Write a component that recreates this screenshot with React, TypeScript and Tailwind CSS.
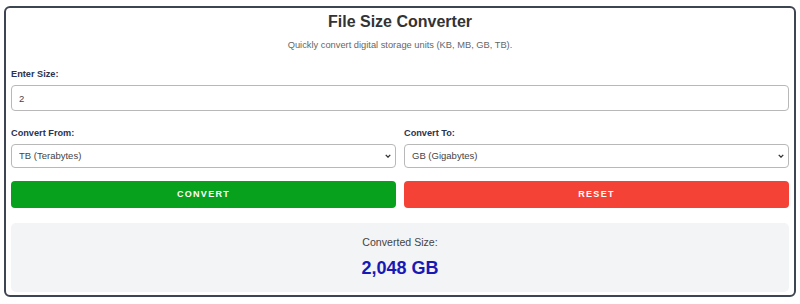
import { useState } from 'react';

const factors: Record<string, number> = { KB: 1, MB: 1024, GB: 1024 * 1024, TB: 1024 * 1024 * 1024 };

const units = [
  { value: 'KB', label: 'KB (Kilobytes)' },
  { value: 'MB', label: 'MB (Megabytes)' },
  { value: 'GB', label: 'GB (Gigabytes)' },
  { value: 'TB', label: 'TB (Terabytes)' },
];

interface UnitSelectProps {
  label: string;
  value: string;
  onChange: (v: string) => void;
}

function UnitSelect({ label, value, onChange }: UnitSelectProps) {
  return (
    <div>
      <label className="block text-[9.2px] leading-[12px] font-bold text-[#2c3350]">{label}</label>
      <div className="relative mt-[5px]">
        <select
          value={value}
          onChange={(e) => onChange(e.target.value)}
          className="block w-full h-[24px] px-[7px] appearance-none text-[9.5px] text-[#444] bg-white border border-[#b8b8b8] rounded-[4px] outline-none"
        >
          {units.map((u) => (
            <option key={u.value} value={u.value}>{u.label}</option>
          ))}
        </select>
        {/* small native-looking chevron */}
        <svg
          viewBox="0 0 8 5"
          className="absolute right-[5px] top-[10px] w-[6px] h-[4px] pointer-events-none"
          fill="none"
          stroke="#333"
          strokeWidth="1.8"
        >
          <path d="M1 1l3 3 3-3" />
        </svg>
      </div>
    </div>
  );
}

export default function App() {
  const [size, setSize] = useState('2');
  const [from, setFrom] = useState('TB');
  const [to, setTo] = useState('GB');
  const [result, setResult] = useState('2,048 GB');

  const convert = () => {
    const n = parseFloat(size);
    if (isNaN(n)) {
      setResult('Invalid input');
      return;
    }
    const value = (n * factors[from]) / factors[to];
    setResult(`${value.toLocaleString('en-US', { maximumFractionDigits: 4 })} ${to}`);
  };

  const reset = () => {
    setSize('');
    setFrom('TB');
    setTo('GB');
    setResult('');
  };

  return (
    <div className="w-[800px] h-[304px] bg-white px-[4px] pt-[6px] font-['Liberation_Sans',Arial,sans-serif]">
      <div className="border-2 border-[#3d4452] rounded-[6px] px-[5px] h-[291px]">
        <h1 className="text-center text-[16px] leading-[20px] font-bold text-[#333] mt-[4px]">File Size Converter</h1>
        <p className="text-center text-[9.3px] leading-[12px] text-[#666] mt-[7px]">
          Quickly convert digital storage units (KB, MB, GB, TB).
        </p>

        <label className="block text-[9.2px] leading-[12px] font-bold text-[#2c3350] mt-[17px]">Enter Size:</label>
        <input
          value={size}
          onChange={(e) => setSize(e.target.value)}
          className="block w-full h-[26px] mt-[5px] px-[7px] text-[9.5px] text-[#444] border border-[#b8b8b8] rounded-[4px] outline-none"
        />

        <div className="grid grid-cols-2 gap-x-[8px] mt-[16px]">
          <UnitSelect label="Convert From:" value={from} onChange={setFrom} />
          <UnitSelect label="Convert To:" value={to} onChange={setTo} />

          <button
            onClick={convert}
            className="h-[27px] mt-[13px] bg-[#07a11e] text-white text-[9px] font-bold tracking-[1.3px] rounded-[4px]"
          >
            CONVERT
          </button>
          <button
            onClick={reset}
            className="h-[27px] mt-[13px] bg-[#f44336] text-white text-[9px] font-bold tracking-[1.3px] rounded-[4px]"
          >
            RESET
          </button>
        </div>

        <div className="mt-[15px] h-[69px] bg-[#f3f4f6] rounded-[5px] flex flex-col items-center pt-[12px]">
          <p className="text-[10.6px] leading-[14px] text-[#444]">Converted Size:</p>
          <p className="text-[18px] leading-[22px] font-bold text-[#1818b4] mt-[8px]">{result}</p>
        </div>
      </div>
    </div>
  );
}
